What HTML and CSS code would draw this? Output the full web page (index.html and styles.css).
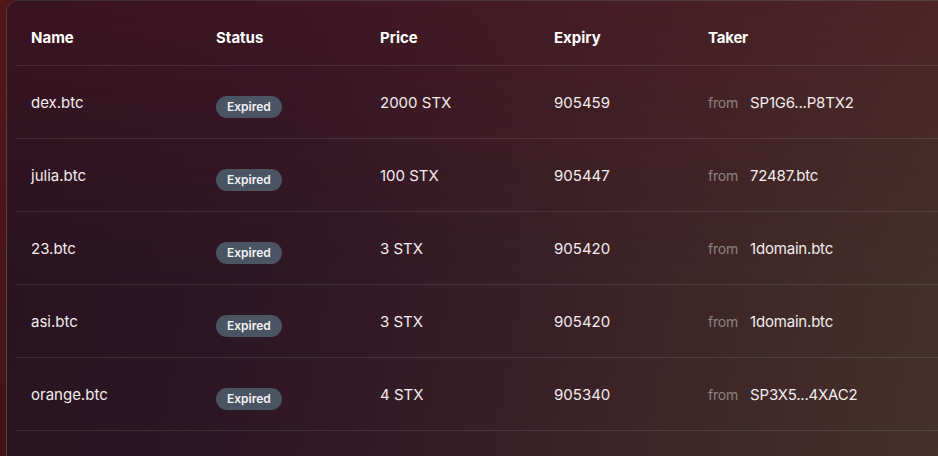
FILE: index.html
```html
<!DOCTYPE html>
<html>
<head>
<meta charset="utf-8">
<link rel="stylesheet" href="styles.css">
</head>
<body>
<div class="card">
  <div class="table">
    <div class="row head">
      <div class="cell">Name</div>
      <div class="cell">Status</div>
      <div class="cell">Price</div>
      <div class="cell">Expiry</div>
      <div class="cell">Taker</div>
    </div>
    <div class="row">
      <div class="cell">dex.btc</div>
      <div class="cell"><span class="badge">Expired</span></div>
      <div class="cell">2000 STX</div>
      <div class="cell">905459</div>
      <div class="cell"><span class="from">from</span>SP1G6...P8TX2</div>
    </div>
    <div class="row">
      <div class="cell">julia.btc</div>
      <div class="cell"><span class="badge">Expired</span></div>
      <div class="cell">100 STX</div>
      <div class="cell">905447</div>
      <div class="cell"><span class="from">from</span>72487.btc</div>
    </div>
    <div class="row">
      <div class="cell">23.btc</div>
      <div class="cell"><span class="badge">Expired</span></div>
      <div class="cell">3 STX</div>
      <div class="cell">905420</div>
      <div class="cell"><span class="from">from</span>1domain.btc</div>
    </div>
    <div class="row">
      <div class="cell">asi.btc</div>
      <div class="cell"><span class="badge">Expired</span></div>
      <div class="cell">3 STX</div>
      <div class="cell">905420</div>
      <div class="cell"><span class="from">from</span>1domain.btc</div>
    </div>
    <div class="row">
      <div class="cell">orange.btc</div>
      <div class="cell"><span class="badge">Expired</span></div>
      <div class="cell">4 STX</div>
      <div class="cell">905340</div>
      <div class="cell"><span class="from">from</span>SP3X5...4XAC2</div>
    </div>
  </div>
</div>
</body>
</html>
```
FILE: styles.css
```css
html, body {
  margin: 0;
  padding: 0;
}
body {
  width: 938px;
  height: 456px;
  overflow: hidden;
  background: linear-gradient(to bottom, #521619, #45121a);
  font-family: "Inter", "DejaVu Sans", sans-serif;
  color: #f3ecec;
}
.card {
  box-sizing: border-box;
  margin: 0 0 0 6px;
  height: 456px;
  border: 1px solid rgba(255, 255, 255, 0.1);
  border-right: none;
  border-bottom: none;
  border-radius: 12px 0 0 0;
  padding: 8px 0 0 8px;
  background:
    linear-gradient(to bottom, rgba(90, 22, 34, 0.35), rgba(90, 22, 34, 0) 60%),
    linear-gradient(100deg, #28131f 0%, #2e1624 30%, #3a2127 62%, #45302a 100%);
}
.table {
  display: flex;
  flex-direction: column;
}
.row {
  display: grid;
  grid-template-columns: 185px 164px 174px 154px 1fr;
  align-items: center;
  height: 72px;
  border-bottom: 1px solid rgba(255, 255, 255, 0.1);
  font-size: 15px;
}
.row.head {
  height: 56px;
  font-weight: 700;
  color: #ffffff;
}
.cell {
  padding-left: 16px;
  display: flex;
  align-items: center;
}
.badge {
  display: inline-block;
  margin-top: 9px;
  height: 22px;
  line-height: 22px;
  padding: 0 11px;
  border-radius: 11px;
  background: #4b5462;
  color: #f2f2f4;
  font-size: 12px;
  font-weight: 600;
}
.from {
  color: #8d8383;
  font-size: 14px;
  margin-right: 12px;
}
.cell:last-child {
  letter-spacing: -0.2px;
}
```
